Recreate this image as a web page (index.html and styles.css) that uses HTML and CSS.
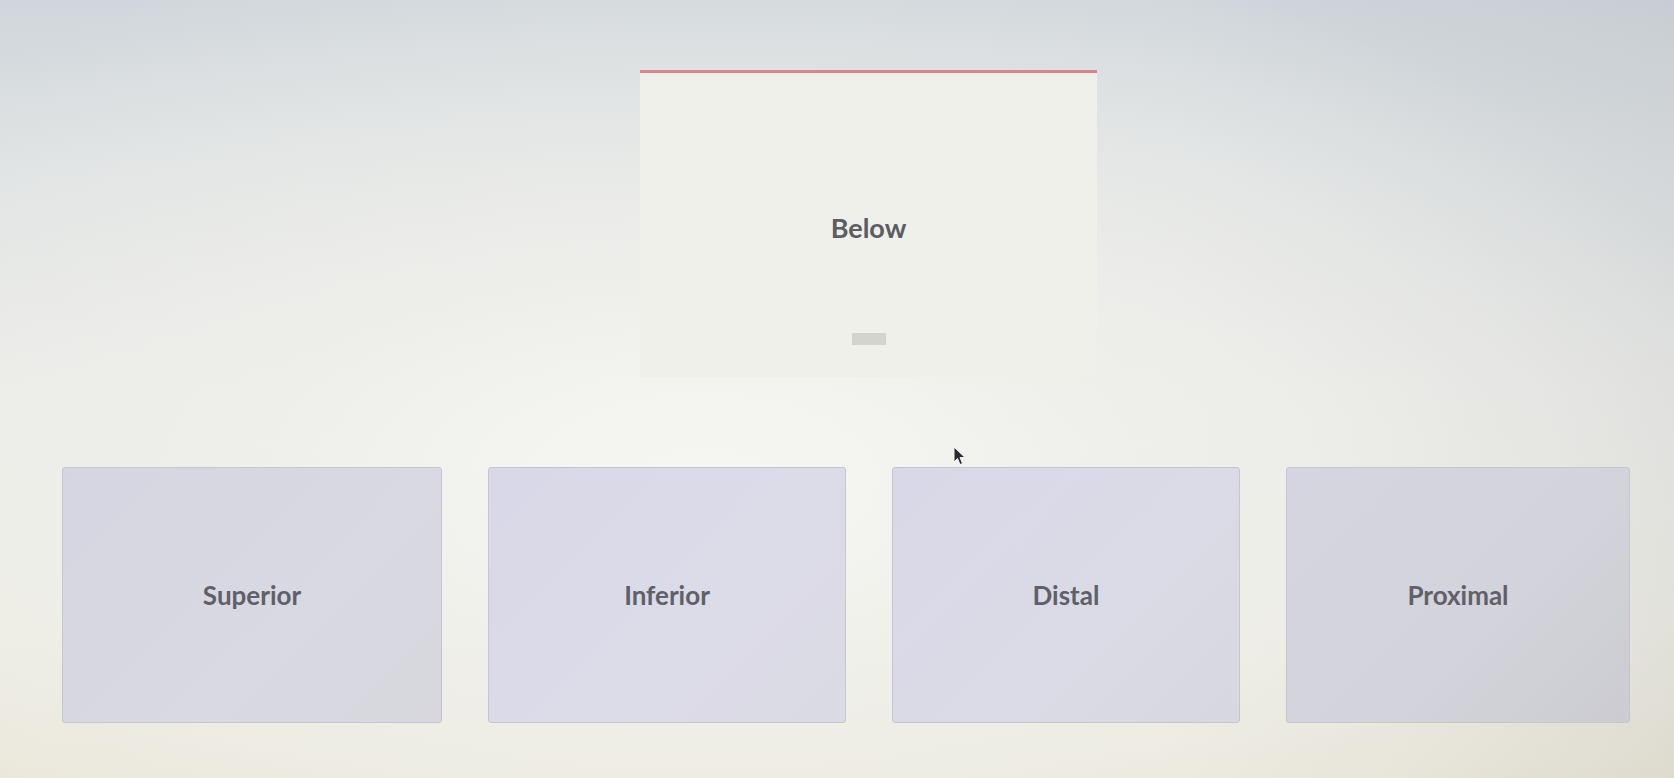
FILE: index.html
```html
<!DOCTYPE html>
<html lang="en">
<head>
<meta charset="utf-8">
<title>Match the term</title>
<link rel="stylesheet" href="styles.css">
</head>
<body>
<main class="stage">
  <section class="prompt">
    <div class="prompt-card">
      <span class="prompt-label">Below</span>
      <span class="prompt-chip"></span>
    </div>
  </section>
  <section class="choices">
    <div class="choice choice-a">Superior</div>
    <div class="choice choice-b">Inferior</div>
    <div class="choice choice-c">Distal</div>
    <div class="choice choice-d">Proximal</div>
  </section>
  <svg class="pointer" width="14" height="20" viewBox="0 0 14 20" aria-hidden="true">
    <path d="M1 1 L1 16 L4.5 12.5 L7 18.5 L9.5 17.5 L7 11.5 L12 11.5 Z" fill="#2a2a30" stroke="#f4f4f0" stroke-width="1"/>
  </svg>
</main>
</body>
</html>
```
FILE: styles.css
```css
html, body {
  margin: 0;
  height: 100%;
}

body {
  font-family: Lato, "Open Sans", sans-serif;
  color: #56565c;
  background:
    radial-gradient(ellipse 1100px 560px at 42% 62%, rgba(246, 246, 242, 1) 0%, rgba(240, 240, 236, 0.8) 40%, rgba(236, 236, 232, 0) 100%),
    linear-gradient(90deg, rgba(0, 0, 0, 0) 70%, rgba(150, 152, 160, 0.14) 100%),
    linear-gradient(180deg, #d0d6db 0%, #dde1e2 22%, #e9eae7 50%, #ecebe2 80%, #eae6d6 100%);
  overflow: hidden;
}

.stage {
  position: relative;
  width: 1674px;
  height: 778px;
  padding-top: 70px;
  box-sizing: border-box;
}

.prompt {
  display: flex;
}

.prompt-card {
  margin-left: 640px;
  width: 457px;
  height: 307px;
  box-sizing: border-box;
  border-top: 3px solid #d9868a;
  background: #f0f0eb;
  display: flex;
  flex-direction: column;
  align-items: center;
  padding-top: 137px;
  padding-bottom: 32px;
}

.prompt-label {
  font-size: 27px;
  font-weight: 700;
  line-height: 36px;
  color: #5c5c62;
}

.prompt-chip {
  margin-top: auto;
  width: 34px;
  height: 12px;
  background: #d3d3cf;
}

.choices {
  margin-top: 90px;
  padding-left: 62px;
  display: grid;
  grid-template-columns: 380px 358px 348px 344px;
  column-gap: 46px;
}

.choice {
  height: 256px;
  box-sizing: border-box;
  border: 1px solid #c6c6d0;
  border-radius: 3px;
  background: #d9d9e5;
  display: flex;
  align-items: center;
  justify-content: center;
  font-size: 26px;
  font-weight: 700;
  color: #606068;
}

.choice-a {
  background: linear-gradient(135deg, #d5d5e1 0%, #d9d9e3 60%, #d7d7dd 100%);
}

.choice-b {
  background: linear-gradient(135deg, #d9d8e8 0%, #dcdbe8 60%, #dadae4 100%);
}

.choice-c {
  background: linear-gradient(135deg, #d8d8e8 0%, #dbdbe7 60%, #d7d7df 100%);
}

.choice-d {
  background: linear-gradient(135deg, #d5d5e1 0%, #d3d3db 60%, #cbcbd1 100%);
}

.pointer {
  position: absolute;
  left: 953px;
  top: 446px;
}
```
